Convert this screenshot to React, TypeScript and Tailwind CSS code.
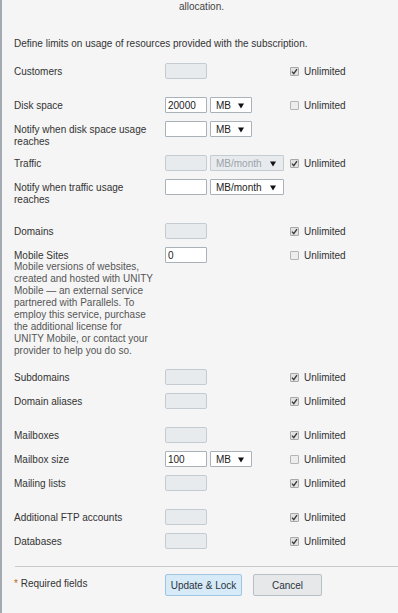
import React from "react";

const Check = ({ checked }: { checked: boolean }) => (
  <div className="flex h-[16px] items-center gap-[5px] pt-[1px]">
    <span
      className={
        checked
          ? "flex h-[9px] w-[9px] items-center justify-center rounded-[1px] border border-[#a8a8a8] bg-[#e2e2e2]"
          : "flex h-[9px] w-[9px] items-center justify-center rounded-[1px] border border-[#b5b5b5] bg-[#ededed]"
      }
    >
      {checked && (
        <svg width="7" height="7" viewBox="0 0 7 7">
          <path d="M1 3.6 L2.8 5.6 L6 1.2" stroke="#3a3a3a" strokeWidth="1.4" fill="none" />
        </svg>
      )}
    </span>
    <span className="text-[#333]">Unlimited</span>
  </div>
);

const Input = ({ value, disabled }: { value?: string; disabled?: boolean }) => (
  <div
    className={
      disabled
        ? "h-[16px] w-[42px] shrink-0 rounded-[2px] border border-[#c4cbd1] bg-[#e8ebee]"
        : "h-[16px] w-[42px] shrink-0 rounded-[1px] border border-[#a9b1b9] bg-white pl-[2px] leading-[15px] text-[#222]"
    }
  >
    {value}
  </div>
);

const Select = ({ label, wide, disabled }: { label: string; wide?: boolean; disabled?: boolean }) => (
  <div
    className={[
      "flex h-[16px] shrink-0 items-center justify-between rounded-[1px] border pl-[5px] pr-[7px] pt-[1px]",
      wide ? "w-[74px]" : "w-[42px]",
      disabled ? "border-[#c4cbd1] bg-[#e8ebee] text-[#9ba3aa]" : "border-[#a9b1b9] bg-white text-[#222]",
    ].join(" ")}
  >
    <span>{label}</span>
    <svg width="6" height="6" viewBox="0 0 6 6">
      <path d="M0 0.5 H6 L3 5.5 Z" fill="#111" />
    </svg>
  </div>
);

const Row = ({
  label,
  children,
  unlimited,
  desc,
}: {
  label: React.ReactNode;
  children?: React.ReactNode;
  unlimited?: boolean;
  desc?: React.ReactNode;
}) => (
  <div className="flex items-start">
    <div className="-mb-[1px] w-[151px] shrink-0 pt-[3px] leading-[12px]">
      <div>{label}</div>
      {desc}
    </div>
    <div className="flex w-[125px] shrink-0 gap-[3px]">{children}</div>
    {unlimited !== undefined && <Check checked={unlimited} />}
  </div>
);

export default function App() {
  return (
    <div className="min-h-[613px] w-[398px] border-l-2 border-[#a3aab1] bg-[#f5f5f5] pl-[12px] font-['Liberation_Sans',Arial,sans-serif] text-[10px] leading-[12px] text-[#333]">
      <p className="-ml-[12px] pl-[3px] pt-[1px] text-center text-[#444]">allocation.</p>
      <p className="mt-[25px]">Define limits on usage of resources provided with the subscription.</p>

      <div className="mt-[13px] flex flex-col gap-[18px]">
        <div className="flex flex-col gap-[8px]">
          <Row label="Customers" unlimited={true}>
            <Input disabled />
          </Row>
        </div>

        <div className="flex flex-col gap-[8px]">
          <Row label="Disk space" unlimited={false}>
            <Input value="20000" />
            <Select label="MB" />
          </Row>
          <Row
            label={
              <>
                Notify when disk space usage
                <br />
                reaches
              </>
            }
          >
            <Input />
            <Select label="MB" />
          </Row>
          <Row label="Traffic" unlimited={true}>
            <Input disabled />
            <Select label="MB/month" wide disabled />
          </Row>
          <Row
            label={
              <>
                Notify when traffic usage
                <br />
                reaches
              </>
            }
          >
            <Input />
            <Select label="MB/month" wide />
          </Row>
        </div>

        <div className="flex flex-col gap-[8px]">
          <Row label="Domains" unlimited={true}>
            <Input disabled />
          </Row>
          <Row
            label="Mobile Sites"
            unlimited={false}
            desc={
              <div className="-mt-[1px] mb-[5px] whitespace-nowrap text-[#555]">
                Mobile versions of websites,
                <br />
                created and hosted with UNITY
                <br />
                Mobile — an external service
                <br />
                partnered with Parallels. To
                <br />
                employ this service, purchase
                <br />
                the additional license for
                <br />
                UNITY Mobile, or contact your
                <br />
                provider to help you do so.
              </div>
            }
          >
            <Input value="0" />
          </Row>
          <Row label="Subdomains" unlimited={true}>
            <Input disabled />
          </Row>
          <Row label="Domain aliases" unlimited={true}>
            <Input disabled />
          </Row>
        </div>

        <div className="flex flex-col gap-[8px]">
          <Row label="Mailboxes" unlimited={true}>
            <Input disabled />
          </Row>
          <Row label="Mailbox size" unlimited={false}>
            <Input value="100" />
            <Select label="MB" />
          </Row>
          <Row label="Mailing lists" unlimited={true}>
            <Input disabled />
          </Row>
        </div>

        <div className="flex flex-col gap-[8px]">
          <Row label="Additional FTP accounts" unlimited={true}>
            <Input disabled />
          </Row>
          <Row label="Databases" unlimited={true}>
            <Input disabled />
          </Row>
        </div>
      </div>

      <div className="ml-[1px] mt-[17px] h-px bg-[#cacaca]" />

      <div className="mt-[7px] flex items-start">
        <div className="w-[151px] shrink-0 pt-[4px] leading-[12px]">
          <span className="text-[#c0641e]">*</span> Required fields
        </div>
        <div className="flex gap-[11px]">
          <button className="flex h-[22px] w-[77px] items-center justify-center rounded-[2px] border border-[#9fc5e2] bg-[#d6eaf8] pt-[1px] text-[#2a3440]">
            Update &amp; Lock
          </button>
          <button className="flex h-[22px] w-[69px] items-center justify-center rounded-[2px] border border-[#b8bfc5] bg-[#e6e8ea] pt-[1px] text-[#2a3440]">
            Cancel
          </button>
        </div>
      </div>
    </div>
  );
}
